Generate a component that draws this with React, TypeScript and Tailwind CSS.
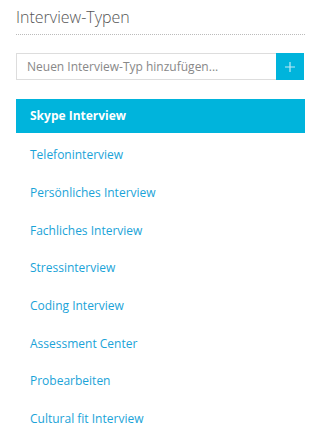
import { useState } from "react";

const types = [
  "Skype Interview",
  "Telefoninterview",
  "Persönliches Interview",
  "Fachliches Interview",
  "Stressinterview",
  "Coding Interview",
  "Assessment Center",
  "Probearbeiten",
  "Cultural fit Interview",
];

export default function App() {
  const [active, setActive] = useState(0);

  return (
    <div
      className="w-[325px] h-[437px] bg-white pl-4 pr-5 pt-[6px]"
      style={{ fontFamily: '"Open Sans", sans-serif' }}
    >
      <h2 className="text-[16px] leading-[22px] text-[#555] font-light">
        Interview-Typen
      </h2>
      <div className="mt-[6px] border-b border-dotted border-[#bbb]" />

      <div className="mt-[18px] flex h-[27px] w-[288px]">
        <input
          className="flex-1 min-w-0 border border-[#ddd] border-r-0 px-[10px] text-[12px] text-[#555] placeholder:text-[#888] outline-none"
          placeholder="Neuen Interview-Typ hinzufügen..."
        />
        <button className="w-[28px] bg-[#00b4dc] flex items-center justify-center">
          <svg width="10" height="10" viewBox="0 0 10 10">
            <path d="M5 0v10M0 5h10" stroke="#bfe9f5" strokeWidth="1.2" />
          </svg>
        </button>
      </div>

      <ul className="mt-[19px] flex flex-col gap-[3.7px] w-[289px]">
        {types.map((t, i) => (
          <li key={t} className={i === 0 ? "mb-[1.5px]" : ""}>
            <button
              onClick={() => setActive(i)}
              className={
                "w-full h-[34px] px-[14px] text-left text-[12px] " +
                (i === active
                  ? "bg-[#00b4dc] text-white font-bold"
                  : "text-[#1aa3d8]")
              }
            >
              {t}
            </button>
          </li>
        ))}
      </ul>
    </div>
  );
}
